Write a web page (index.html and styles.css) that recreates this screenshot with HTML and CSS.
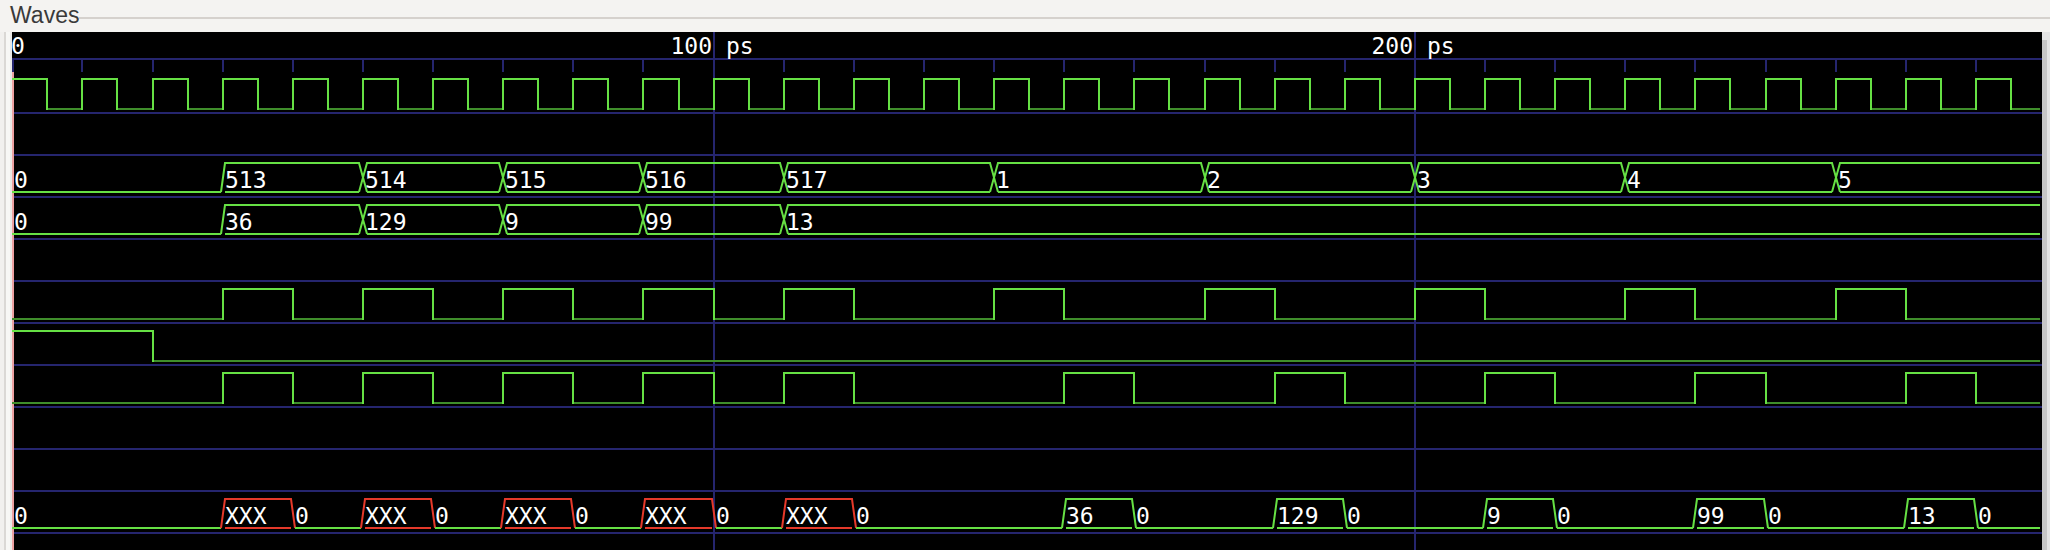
FILE: index.html
```html
<!DOCTYPE html>
<html lang="en">
<head>
<meta charset="utf-8">
<title>Waves</title>
<link rel="stylesheet" href="styles.css">
</head>
<body>
<div class="panel">
  <div class="legend">
    <span class="legend-title">Waves</span>
    <span class="legend-rule"></span>
  </div>
  <div class="viewport">
    <div class="gutter"></div>
    <svg class="waves" id="waves" width="2030" height="518" viewBox="12 32 2030 518" xmlns="http://www.w3.org/2000/svg"></svg>
    <div class="scrollbar"><div class="scroll-thumb"></div></div>
  </div>
</div>
<script src="script.js"></script>
</body>
</html>
```

FILE: styles.css
```css
html, body {
  margin: 0;
  padding: 0;
}
body {
  background: #f4f3f1;
  overflow: hidden;
  font-family: "Liberation Sans", Arial, sans-serif;
}
.panel {
  width: 2050px;
  height: 550px;
  display: flex;
  flex-direction: column;
}
.legend {
  height: 32px;
  display: flex;
  align-items: flex-start;
  padding-left: 10px;
}
.legend-title {
  font-size: 23px;
  line-height: 30px;
  color: #3a3a3a;
}
.legend-rule {
  flex: 1;
  height: 2px;
  margin-top: 17px;
  background: #d5d1cd;
}
.viewport {
  display: flex;
  height: 518px;
}
.gutter {
  width: 12px;
  background: linear-gradient(to right, #f1f0ee 0 4px, #dad8d5 4px 6px, #f7f7f5 6px 10px, #e9e8e6 10px 12px);
}
.waves {
  display: block;
  width: 2030px;
  height: 518px;
  background: #000;
}
.scrollbar {
  width: 8px;
  box-sizing: border-box;
  padding-top: 8px;
  background: #e4e4e4;
}
.scroll-thumb {
  height: 100%;
  width: 5px;
  background: #c6c6c6;
}

/* waveform drawing */
.grid { fill: #25256e; }
.edge { fill: #eba0a0; }
.sig { fill: none; stroke: #66e044; stroke-width: 2; }
.sig-low { fill: none; stroke: #3f8e2b; stroke-width: 2; }
.bus { fill: none; stroke: #66e044; stroke-width: 2; }
.bus-x { fill: none; stroke: #e5392a; stroke-width: 2; }
.lbl {
  font-family: "DejaVu Sans Mono", "Liberation Mono", monospace;
  font-size: 23px;
  fill: #ffffff;
}
```

FILE: script.js
```js
(function () {
  var svg = document.getElementById('waves');
  var NS = 'http://www.w3.org/2000/svg';
  var XEND = 2040;
  function X(t) { return Math.round(12.3 + 7.013 * t); }
  function rowTop(r) { return 71 + 42 * r; }

  function el(name, attrs, text) {
    var e = document.createElementNS(NS, name);
    for (var k in attrs) e.setAttribute(k, attrs[k]);
    if (text !== undefined) e.textContent = text;
    svg.appendChild(e);
    return e;
  }

  /* grid: axis line, ticks, row separators, major markers */
  el('rect', { x: 12, y: 58, width: 2030, height: 2, 'class': 'grid' });
  for (var t = 0; t <= 280; t += 10) {
    if (t === 100 || t === 200) continue;
    el('rect', { x: t === 0 ? 12 : X(t) - 1, y: 60, width: 2, height: 12, 'class': 'grid' });
  }
  for (var i = 1; i <= 11; i++) {
    el('rect', { x: 12, y: rowTop(i) - 1, width: 2030, height: 2, 'class': 'grid' });
  }
  [100, 200].forEach(function (m) {
    el('rect', { x: X(m) - 1, y: 32, width: 2, height: 518, 'class': 'grid' });
  });
  el('rect', { x: 12, y: 72, width: 2, height: 478, 'class': 'edge' });

  /* axis labels */
  el('text', { x: 11, y: 53.5, 'class': 'lbl' }, '0');
  el('text', { x: X(100) - 43.5, y: 53.5, 'class': 'lbl' }, '100 ps');
  el('text', { x: X(200) - 43.5, y: 53.5, 'class': 'lbl' }, '200 ps');

  /* digital signals */
  function digital(row, changes) {
    var Y = rowTop(row), hi = Y + 8, lo = Y + 38;
    var d = 'M12,' + (changes[0][1] ? hi : lo);
    for (var j = 1; j < changes.length; j++) {
      var x = X(changes[j][0]);
      d += ' H' + x + ' V' + (changes[j][1] ? hi : lo);
    }
    d += ' H' + XEND;
    el('path', { d: d, 'class': 'sig' });
    for (var k = 0; k < changes.length; k++) {
      if (changes[k][1]) continue;
      var xa = k === 0 ? 12 : X(changes[k][0]) + 1;
      var xb = k === changes.length - 1 ? XEND : X(changes[k + 1][0]) - 1;
      el('path', { d: 'M' + xa + ',' + lo + ' H' + xb, 'class': 'sig-low' });
    }
  }

  function pulses(highs) {
    var c = [[0, 0]];
    highs.forEach(function (h) { c.push([h[0], 1]); c.push([h[1], 0]); });
    return c;
  }

  var clk = [[0, 1]];
  for (var p = 0; p < 29; p++) {
    if (p > 0) clk.push([p * 10, 1]);
    clk.push([p * 10 + 5, 0]);
  }
  digital(0, clk);
  digital(5, pulses([[30, 40], [50, 60], [70, 80], [90, 100], [110, 120], [140, 150], [170, 180], [200, 210], [230, 240], [260, 270]]));
  digital(6, [[0, 1], [20, 0]]);
  digital(7, pulses([[30, 40], [50, 60], [70, 80], [90, 100], [110, 120], [150, 160], [180, 190], [210, 220], [240, 250], [270, 280]]));

  /* bus signals */
  function bus(row, changes) {
    var Y = rowTop(row), top = Y + 8, bot = Y + 37;
    var n = changes.length;
    function slant(a, b) { return (a !== '0' && b !== '0') ? 4 : 2; }
    for (var j = 0; j < n; j++) {
      var v = changes[j][1];
      var last = j === n - 1;
      var xa = j === 0 ? 12 : X(changes[j][0]);
      var xb = last ? XEND : X(changes[j + 1][0]);
      var sl = j === 0 ? 0 : slant(changes[j - 1][1], v);
      var sr = last ? 0 : slant(v, changes[j + 1][1]);
      var cls = v === 'XXX' ? 'bus-x' : 'bus';
      var d;
      if (v === '0') {
        d = 'M' + (xa + sl) + ',' + bot + ' H' + (xb - sr);
      } else if (last) {
        d = 'M' + (xa - sl) + ',' + bot + ' L' + (xa + sl) + ',' + top + ' H' + xb +
            ' M' + (xa + sl) + ',' + bot + ' H' + xb;
      } else {
        d = 'M' + (xa - sl) + ',' + bot + ' L' + (xa + sl) + ',' + top + ' H' + (xb - sr) +
            ' L' + (xb + sr) + ',' + bot + ' M' + (xa + sl) + ',' + bot + ' H' + (xb - sr);
      }
      el('path', { d: d, 'class': cls });
    }
    for (var k = 0; k < n; k++) {
      var tx = (k === 0 ? 12 : X(changes[k][0])) + 2;
      el('text', { x: tx, y: Y + 32.5, 'class': 'lbl' }, changes[k][1]);
    }
  }

  bus(2, [[0, '0'], [30, '513'], [50, '514'], [70, '515'], [90, '516'], [110, '517'], [140, '1'], [170, '2'], [200, '3'], [230, '4'], [260, '5']]);
  bus(3, [[0, '0'], [30, '36'], [50, '129'], [70, '9'], [90, '99'], [110, '13']]);
  bus(10, [[0, '0'], [30, 'XXX'], [40, '0'], [50, 'XXX'], [60, '0'], [70, 'XXX'], [80, '0'], [90, 'XXX'], [100, '0'], [110, 'XXX'], [120, '0'],
           [150, '36'], [160, '0'], [180, '129'], [190, '0'], [210, '9'], [220, '0'], [240, '99'], [250, '0'], [270, '13'], [280, '0']]);
})();
```
